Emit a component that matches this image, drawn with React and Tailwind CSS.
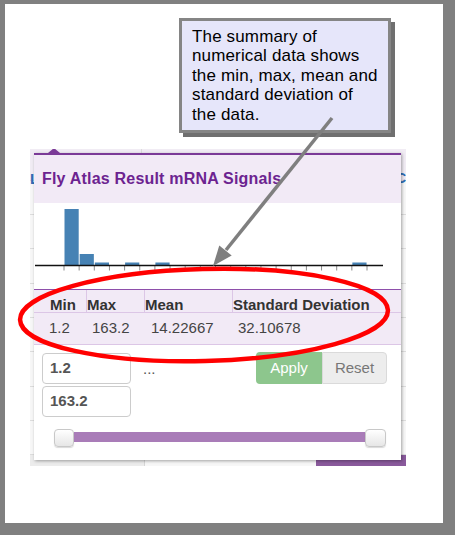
export default function App() {
  const ticks = Array.from({ length: 21 }, (_, i) => 30 + i * 15.15);
  const bars = [
    { i: 0, top: 6 },
    { i: 1, top: 51 },
    { i: 2, top: 59.5 },
    { i: 4, top: 59.5 },
    { i: 6, top: 59.5 },
    { i: 19, top: 59.5 },
  ];
  const rowHeights = [34, 34, 35, 34, 34, 35, 34, 34];
  return (
    <div className="relative w-[455px] h-[535px] bg-[#808080] overflow-hidden font-['Liberation_Sans',Arial,sans-serif]">
      <div className="pt-[4px] pl-[5px]">
        <div className="w-[438px] h-[519px] bg-white pt-[145px] pl-[25px]">
          {/* underlying page */}
          <div className="relative w-[376px] h-[317px] bg-[#f7f7f7] overflow-hidden flex flex-col">
            <div className="flex h-[32px] shrink-0 bg-[#f1ecf4] border-b border-b-[#dedede]">
              <div className="w-[115px] border-r border-r-[#dcdcdc] text-[#2f6db5] font-bold text-[15px] leading-[14px] pt-[23px]">L</div>
              <div className="w-[170px] border-r border-r-[#dcdcdc]"></div>
              <div className="flex-1 pl-[89px] pt-[10px] text-[#2f6db5] font-bold text-[14px] leading-[13px]">
                /<br />C
              </div>
            </div>
            {rowHeights.map((h, k) => (
              <div key={k} className="flex shrink-0 border-b border-b-[#dcdcdc]" style={{ height: h }}>
                <div className="w-[115px] border-r border-r-[#dcdcdc]"></div>
                <div className="w-[170px] border-r border-r-[#dcdcdc]"></div>
                <div className="flex-1"></div>
              </div>
            ))}
            <div className="flex flex-1">
              <div className="w-[115px] bg-[#ececec] border-r border-r-[#d6d6d6]"></div>
              <div className="w-[171px] bg-[#f7f7f7]"></div>
              <div className="flex-1 bg-[#8a5a9c]"></div>
            </div>

            {/* popover */}
            <div className="absolute left-[4px] top-[4px] w-[367px] h-[307px] bg-white border-t-2 border-t-[#7b3a97] shadow-[1px_1px_3px_rgba(0,0,0,0.35)]">
              <div className="absolute -top-[7px] left-[14px] w-0 h-0 border-x-[6px] border-x-transparent border-b-[5px] border-b-[#7b3a97]"></div>
              <div className="h-[48px] bg-[#f2eaf6] pl-[8px] flex items-center">
                <span className="text-[16px] font-bold tracking-[0.2px] text-[#6c2390]">Fly Atlas Result mRNA Signals</span>
              </div>
              <svg width="367" height="86" className="block">
                {bars.map((b) => {
                  const x = 30 + b.i * 15.15 + 0.5;
                  return <rect key={b.i} x={x} y={b.top} width={14.2} height={62.5 - b.top} fill="#4682b4" />;
                })}
                {ticks.map((t, k) => (
                  <line key={k} x1={t} y1={63} x2={t} y2={67.5} stroke="#8a8a8a" strokeWidth="1" />
                ))}
                <line x1={1} y1={62.5} x2={349} y2={62.5} stroke="#111" strokeWidth="1.5" />
              </svg>
              <div className="border-t border-t-[#8e4fab] bg-[#f2eaf6]">
                <div className="flex h-[23px] border-b border-b-[#dcc6e6] text-[15px] font-bold text-[#333] leading-[17px]">
                  <div className="w-[52px] pl-[16px] pt-[6px]">Min</div>
                  <div className="w-[58px] border-l border-l-[#dcc6e6] pt-[6px]">Max</div>
                  <div className="w-[88px] border-l border-l-[#dcc6e6] pt-[6px]">Mean</div>
                  <div className="flex-1 border-l border-l-[#dcc6e6] pt-[6px]">Standard Deviation</div>
                </div>
                <div className="flex items-center h-[32px] border-b border-b-[#dcc6e6] text-[15px] text-[#444]">
                  <div className="w-[52px] pl-[15px]">1.2</div>
                  <div className="w-[58px] pl-[6px]">163.2</div>
                  <div className="w-[88px] pl-[7px]">14.22667</div>
                  <div className="flex-1 pl-[6px]">32.10678</div>
                </div>
              </div>
              <div className="flex pl-[8px] pr-[14px] mt-[8px]">
                <div className="flex flex-col gap-[2px]">
                  <div className="w-[89px] h-[31px] border border-[#cccccc] rounded-[4px] pl-[7px] flex items-center text-[15px] font-bold text-[#555]">1.2</div>
                  <div className="w-[89px] h-[31px] border border-[#cccccc] rounded-[4px] pl-[7px] flex items-center text-[15px] font-bold text-[#555]">163.2</div>
                </div>
                <div className="ml-[12px] h-[31px] leading-[31px] text-[15px] text-[#555]">...</div>
                <div className="ml-auto flex h-[32px] -mt-[1px]">
                  <div className="w-[66px] bg-[#8dc68d] text-white rounded-l-[4px] flex items-center justify-center text-[15px]">Apply</div>
                  <div className="w-[65px] bg-[#ededed] text-[#777] border border-[#dadada] rounded-r-[4px] flex items-center justify-center text-[15px]">Reset</div>
                </div>
              </div>
              <div className="flex items-start pl-[20px] mt-[12px]">
                <div className="w-[20px] h-[18px] rounded-[4px] border border-[#c8c8c8] bg-linear-to-b from-white to-[#e6e6e6] shadow-[0_1px_1px_rgba(0,0,0,0.15)]"></div>
                <div className="w-[291px] h-[10px] mt-[3px] bg-[#a97cb8]"></div>
                <div className="w-[21px] h-[18px] rounded-[4px] border border-[#c8c8c8] bg-linear-to-b from-white to-[#e6e6e6] shadow-[0_1px_1px_rgba(0,0,0,0.15)]"></div>
              </div>
            </div>
          </div>
        </div>
      </div>

      {/* callout */}
      <div className="absolute left-[179px] top-[18px] w-[212px] h-[115px] bg-[#e6e6fa] border-[3px] border-[#858585] shadow-[4px_4px_0_#6f6f6f] pl-[10px] pt-[6px] text-[17px] leading-[19.4px] tracking-[0.15px] text-black">
        The summary of<br />numerical data shows<br />the min, max, mean and<br />standard deviation of<br />the data.
      </div>

      <svg className="absolute left-0 top-0 pointer-events-none" width="455" height="535">
        <line x1="332" y1="118" x2="226" y2="250" stroke="#7f7f7f" strokeWidth="3.5" />
        <polygon points="213,266 231.7,255.4 219.3,245.4" fill="#7f7f7f" />
        <ellipse cx="204" cy="315" rx="184" ry="46" fill="none" stroke="#ff0000" strokeWidth="4.5" transform="rotate(-1.5 204 315)" />
      </svg>
    </div>
  );
}
